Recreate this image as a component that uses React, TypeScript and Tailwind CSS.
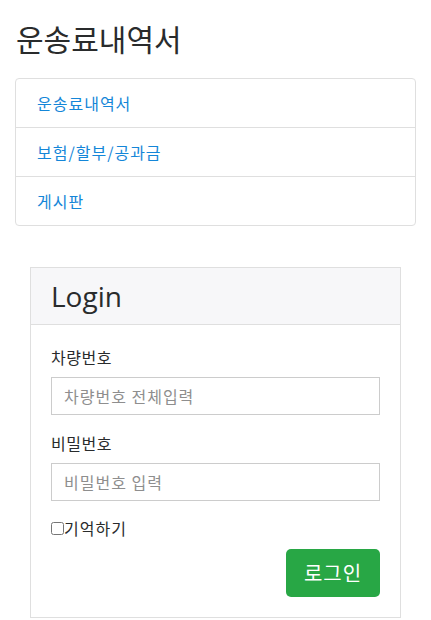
import React from "react";

const font = { fontFamily: '"Noto Sans CJK KR", "Noto Sans", sans-serif' };

export default function App() {
  return (
    <div className="min-h-[620px] bg-white px-[15px] text-[#292b2c]" style={font}>
      <h1 className="pt-[18px] text-[30px] leading-[40px] font-normal mb-[20px] pl-px">운송료내역서</h1>
      <div className="border border-[#dfdfdf] rounded-[4px] flex flex-col">
        {["운송료내역서", "보험/할부/공과금", "게시판"].map((t, i) => (
          <a
            key={t}
            href="#"
            className={`px-[21px] py-[12px] text-[16px] leading-[24px] tracking-[1px] text-[#1486d8] ${i > 0 ? "border-t border-[#dfdfdf]" : ""}`}
          >
            {t}
          </a>
        ))}
      </div>
      <div className="mx-[15px] mt-[41px] border border-[#dfdfdf] flex flex-col">
        <div className="bg-[#f7f7f9] border-b border-[#dfdfdf] h-[57px] px-[20px] flex items-center">
          <h2 className="text-[28px] leading-[34px] font-medium text-[#292b2c]" style={{ fontFamily: '"Open Sans", "Noto Sans", sans-serif' }}>Login</h2>
        </div>
        <div className="px-[20px] pt-[20px] pb-[20px] flex flex-col">
          <label className="text-[16px] leading-[24px] tracking-[0.5px] mb-[8px]">차량번호</label>
          <input
            className="h-[38px] border border-[#cccccc] px-[12px] text-[16px] tracking-[1px] placeholder:text-[#8e8e8e] outline-none"
            placeholder="차량번호 전체입력"
            style={font}
          />
          <label className="text-[16px] leading-[24px] tracking-[0.5px] mt-[16px] mb-[8px]">비밀번호</label>
          <input
            type="password"
            className="h-[38px] border border-[#cccccc] px-[12px] text-[16px] tracking-[1px] placeholder:text-[#8e8e8e] outline-none"
            placeholder="비밀번호 입력"
            style={font}
          />
          <label className="mt-[15px] flex items-center text-[16px] leading-[24px] tracking-[1px]">
            <input type="checkbox" className="w-[13px] h-[13px] m-0" />
            <span>기억하기</span>
          </label>
          <div className="flex justify-end mt-[9px]">
            <button className="w-[94px] h-[48px] rounded-[5px] bg-[#28a745] text-white text-[20px] leading-[28px] tracking-[1px]" style={font}>
              로그인
            </button>
          </div>
        </div>
      </div>
    </div>
  );
}
